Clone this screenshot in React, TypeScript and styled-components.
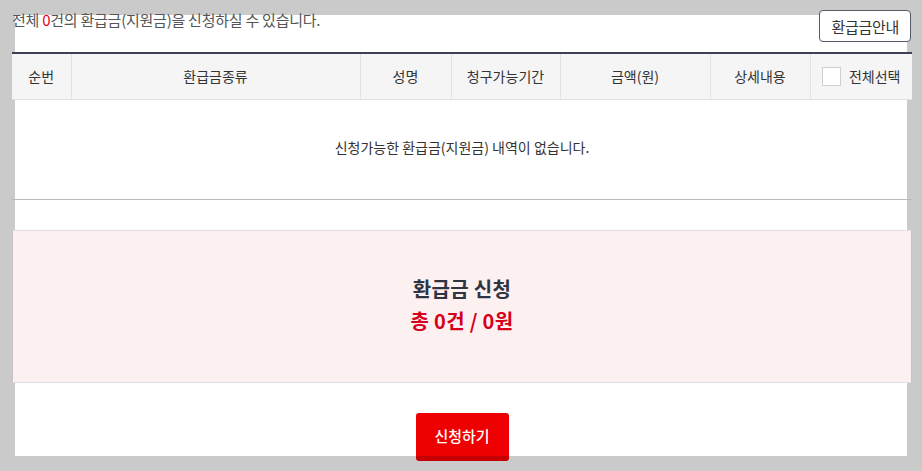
import React from 'react';
import styled, { createGlobalStyle } from 'styled-components';

const GlobalStyle = createGlobalStyle`
	html, body {
		margin: 0;
		padding: 0;
		background: #cacaca;
	}
	* {
		box-sizing: border-box;
	}
`;

const Page = styled.div`
	height: 471px;
	padding: 15px;
	font-family: "Noto Sans CJK KR", "Noto Sans", sans-serif;
	overflow: hidden;
`;

const Panel = styled.div`
	width: 892px;
	height: 441px;
	background: #fff;
	display: flex;
	flex-direction: column;
`;

const Content = styled.div`
	margin: -5px -5px 0 -3px;
	display: flex;
	flex-direction: column;
`;

const TopBar = styled.div`
	display: flex;
	justify-content: space-between;
	align-items: flex-start;
	margin-bottom: 10px;
`;

const Summary = styled.p`
	margin: 0;
	font-size: 15px;
	line-height: 20px;
	color: #555;
	letter-spacing: -0.25px;
`;

const Count = styled.span`
	color: #e8001c;
`;

const GuideButton = styled.button`
	height: 32px;
	padding: 0 11px;
	background: #fff;
	border: 1px solid #555b66;
	border-radius: 4px;
	font-family: inherit;
	font-size: 15px;
	color: #333;
	letter-spacing: -0.3px;
	margin-right: 1px;
`;

const Table = styled.table`
	width: 100%;
	border-collapse: collapse;
	border-top: 2px solid #3d3f52;
	table-layout: fixed;
`;

const Th = styled.th<{ $w: number }>`
	width: ${(p) => p.$w}px;
	height: 46px;
	background: #f5f5f5;
	border-bottom: 1px solid #e0e0e0;
	border-left: 1px solid #e2e2e2;
	font-size: 14px;
	font-weight: 400;
	color: #333;
	padding: 0;

	&:first-child {
		border-left: none;
	}
`;

const CheckLabel = styled.label`
	display: flex;
	align-items: center;
	justify-content: center;
	gap: 8px;
`;

const CheckBox = styled.span`
	width: 19px;
	height: 19px;
	background: #fff;
	border: 1px solid #cfcfcf;
`;

const EmptyCell = styled.td`
	height: 100px;
	text-align: center;
	font-size: 14px;
	color: #333;
	border-bottom: 1px solid #b9b9b9;
	padding: 0 0 5px;
`;

const TotalBox = styled.div`
	margin-top: 30px;
	height: 153px;
	padding-bottom: 2px;
	background: #fdf0f0;
	border: 1px solid #e0dcdf;
	border-left-color: #c9c2c2;
	border-right-color: #c9c2c2;
	display: flex;
	flex-direction: column;
	align-items: center;
	justify-content: center;
`;

const TotalTitle = styled.strong`
	font-size: 20px;
	line-height: 32px;
	color: #2e3442;
	letter-spacing: 0.3px;
`;

const TotalValue = styled.strong`
	font-size: 20px;
	line-height: 32px;
	color: #d6001c;
	letter-spacing: 0.3px;
`;

const Actions = styled.div`
	display: flex;
	justify-content: center;
	margin-top: 30px;
`;

const ApplyButton = styled.button`
	width: 93px;
	height: 48px;
	background: #ee0000;
	border: none;
	border-bottom: 5px solid #c40000;
	border-radius: 3px;
	color: #fff;
	font-family: inherit;
	font-size: 15px;
	font-weight: 500;
	padding-top: 4px;
`;

const columns: { label: string; width: number }[] = [
	{ label: '순번', width: 59 },
	{ label: '환급금종류', width: 289 },
	{ label: '성명', width: 91 },
	{ label: '청구가능기간', width: 109 },
	{ label: '금액(원)', width: 150 },
	{ label: '상세내용', width: 100 },
];

function App() {
	return (
		<>
			<GlobalStyle />
			<Page>
				<Panel>
					<Content>
						<TopBar>
							<Summary>
								전체 <Count>0</Count>건의 환급금(지원금)을 신청하실 수 있습니다.
							</Summary>
							<GuideButton>환급금안내</GuideButton>
						</TopBar>
						<Table>
							<thead>
								<tr>
									{columns.map(({ label, width }) => (
										<Th key={label} $w={width}>
											{label}
										</Th>
									))}
									<Th $w={102}>
										<CheckLabel>
											<CheckBox />
											전체선택
										</CheckLabel>
									</Th>
								</tr>
							</thead>
							<tbody>
								<tr>
									<EmptyCell colSpan={7}>
										신청가능한 환급금(지원금) 내역이 없습니다.
									</EmptyCell>
								</tr>
							</tbody>
						</Table>
						<TotalBox>
							<TotalTitle>환급금 신청</TotalTitle>
							<TotalValue>총 0건 / 0원</TotalValue>
						</TotalBox>
						<Actions>
							<ApplyButton>신청하기</ApplyButton>
						</Actions>
					</Content>
				</Panel>
			</Page>
		</>
	);
}

export default App;
